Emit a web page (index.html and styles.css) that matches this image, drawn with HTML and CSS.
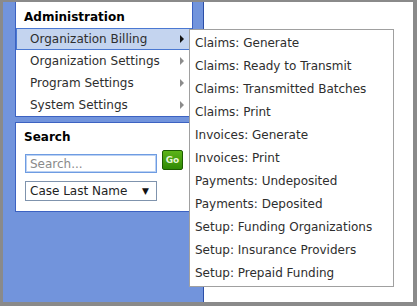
FILE: index.html
```html
<!doctype html>
<html lang="en">
<head>
    <meta charset="UTF-8">
    <title>Administration</title>
    <link rel="stylesheet" href="styles.css">
</head>
<body>
<div class="frame">
    <div class="sidebar">
        <div class="panel admin">
            <h3>Administration</h3>
            <ul class="menu">
                <li class="active">Organization Billing<span class="arrow"></span>
                    <ul class="flyout">
                        <li>Claims: Generate</li>
                        <li>Claims: Ready to Transmit</li>
                        <li>Claims: Transmitted Batches</li>
                        <li>Claims: Print</li>
                        <li>Invoices: Generate</li>
                        <li>Invoices: Print</li>
                        <li>Payments: Undeposited</li>
                        <li>Payments: Deposited</li>
                        <li>Setup: Funding Organizations</li>
                        <li>Setup: Insurance Providers</li>
                        <li>Setup: Prepaid Funding</li>
                    </ul>
                </li>
                <li>Organization Settings<span class="arrow"></span></li>
                <li>Program Settings<span class="arrow"></span></li>
                <li>System Settings<span class="arrow"></span></li>
            </ul>
        </div>
        <div class="panel search">
            <h3>Search</h3>
            <div class="search-row">
                <input class="search-input" type="text" placeholder="Search...">
                <button class="go">Go</button>
            </div>
            <div class="select">Case Last Name<span class="caret">&#9660;</span></div>
        </div>
    </div>
    <div class="content"></div>
</div>
</body>
</html>
```

FILE: styles.css
```css
html, body{
    margin: 0;
    height: 100%;
}
body{
    font-family: "DejaVu Sans", Verdana, sans-serif;
    font-size: 12px;
    color: #2e2e2e;
}
.frame{
    height: 100vh;
    box-sizing: border-box;
    border-style: solid;
    border-color: #8a8a8a;
    border-width: 2px 4px 4px 3px;
    display: flex;
    overflow: hidden;
}
.sidebar{
    width: 201px;
    flex: none;
    background: #7294dc;
    border-right: 1px solid #2c4ea6;
    padding-left: 12px;
    box-sizing: border-box;
}
.content{
    flex: 1;
    background: #fff;
}
.panel{
    width: 178px;
    box-sizing: border-box;
    background: #fff;
    border: 1px solid #3c62c2;
}
.panel h3{
    margin: 0;
    font-size: 12px;
    line-height: 16px;
    font-weight: bold;
    color: #000;
}
.admin{
    border-top: none;
    position: relative;
    z-index: 2;
}
.admin h3{
    padding: 7px 8px 3px;
}
.menu{
    list-style: none;
    margin: 0;
    padding: 0;
}
.menu > li{
    position: relative;
    height: 22px;
    line-height: 20px;
    box-sizing: border-box;
    border: 1px solid transparent;
    padding-left: 13px;
}
.menu > li.active{
    background: #c4d4ef;
    border-color: #4a78d2;
}
.arrow{
    position: absolute;
    right: 7px;
    top: 6px;
    width: 0;
    height: 0;
    border-top: 4px solid transparent;
    border-bottom: 4px solid transparent;
    border-left: 4px solid #8c8c8c;
}
.active .arrow{
    border-left-color: #111;
}
.flyout{
    position: absolute;
    left: 172px;
    top: 0;
    width: 205px;
    box-sizing: border-box;
    list-style: none;
    margin: 0;
    padding: 2px 0 1px;
    background: #fff;
    border: 1px solid #a0a0a0;
}
.flyout li{
    line-height: 23px;
    padding-left: 5px;
    white-space: nowrap;
}
.search{
    margin-top: 5px;
    height: 90px;
    padding: 6px 9px 0;
}
.search h3{
    margin-left: -1px;
}
.search-row{
    display: flex;
    align-items: flex-start;
    gap: 5px;
    margin-top: 5px;
}
.search-input{
    margin: 4px 0 0;
    width: 132px;
    height: 19px;
    box-sizing: border-box;
    border: 1px solid #6e9ce2;
    box-shadow: 0 0 0 1px #bcd2f3 inset;
    padding: 0 4px;
    font-family: inherit;
    font-size: 12px;
    color: #333;
    outline: none;
}
.search-input::placeholder{
    color: #8a8a8a;
}
.go{
    width: 21px;
    height: 20px;
    padding: 0;
    border: 1px solid #1d5c02;
    border-radius: 2px;
    background: linear-gradient(#5cb418, #2f8a05);
    color: #e6f6d6;
    font-family: inherit;
    font-size: 9px;
    font-weight: bold;
}
.select{
    position: relative;
    margin-top: 8px;
    width: 132px;
    height: 20px;
    box-sizing: border-box;
    border: 1px solid #7f93ad;
    line-height: 18px;
    padding-left: 4px;
    color: #222;
}
.caret{
    position: absolute;
    right: 7px;
    top: 0;
    font-size: 9px;
    color: #111;
}
```
